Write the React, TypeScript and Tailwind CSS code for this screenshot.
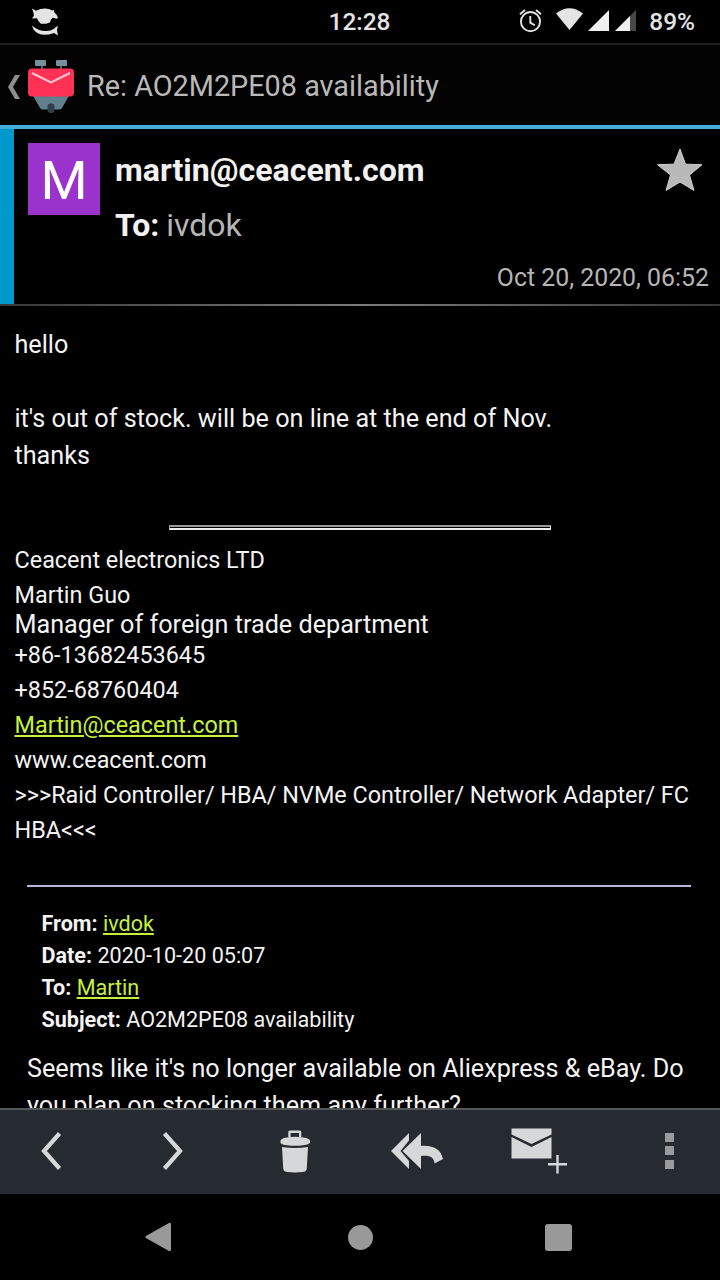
import type { ReactNode } from "react";

function StatusBar() {
  return (
    <div className="grid h-[45px] shrink-0 grid-cols-[1fr_auto_1fr] items-center border-b-2 border-[#1d1f20] text-[#e4e4e4]">
      <svg className="ml-[31px] h-7 w-7" viewBox="31 7.500 28 28" fill="currentColor">
        <path d="M32 8l4 2.200Q45 6 52.500 10l1.500-.5v2q3.500 3 4 6l-1.500.8-3.500-1-2 1.500-1 3.200-4 1.200h-5l-2.500-2.500-1.500-3-5 .3 2-3-.7-3.500z" />
        <path d="M32 25q6 5.500 14 5.500 5 0 8-2.200l3.800-3.300-.8 5 1 5-4-2.500Q40 37.500 33.500 29z" />
      </svg>
      <span className="pt-[2px] pr-px text-[24.400px] font-medium">12:28</span>
      <div className="flex items-center justify-end pr-[25px]">
        <svg className="h-7 w-[120px]" viewBox="518 8 120 28">
          <g fill="none" stroke="#e4e4e4" strokeWidth="1.9">
            <circle cx="530.5" cy="22.600" r="9.600" />
            <path d="M530.300 17v6.600l4.500 2.700M520 15.200l5-4.200M541 15.200l-5-4.200" />
          </g>
          <path d="M556 14.500q13.500-10.500 27 0L569.500 31z" fill="#e4e4e4" />
          <path d="M609 11v21h-21z" fill="#f0f0f0" />
          <path d="M636 11v21h-21z" fill="#484848" />
          <path d="M630 17v15h-15z" fill="#f0f0f0" />
        </svg>
        <span className="ml-[11px] pt-[2px] text-[24.400px] font-medium">89%</span>
      </div>
    </div>
  );
}

function TitleBar() {
  return (
    <div className="flex h-[84px] shrink-0 items-center border-b-4 border-[#43add6] bg-[#030303] pt-[3px]">
      <svg className="ml-2 h-[26px] w-3" viewBox="0 0 12 26" fill="#8e8e8e">
        <path d="M7 1h5L5 13l7 12H7L0 13z" />
      </svg>
      <svg className="ml-2 h-[54px] w-[46px]" viewBox="28 60 46 54">
        <path d="M41 65h2v5h-2zM60 65h2v5h-2z" fill="#50656f" />
        <rect x="35" y="60" width="11" height="6" rx="1" fill="#78909c" />
        <rect x="56" y="60" width="11" height="6" rx="1" fill="#78909c" />
        <path d="M32 94h38l-8 14q-1 1.500-3 1.500H43q-2 0-3-1.500z" fill="#627f8e" />
        <rect x="47.500" y="103.500" width="7" height="9.500" rx="3" fill="#303f47" />
        <rect x="28" y="68.500" width="46" height="28" rx="4" fill="#ff3155" />
        <path d="M32 73l19 9.500 19-9.500" fill="none" stroke="#ffc9d2" strokeWidth="2" />
      </svg>
      <h1 className="ml-[13px] pt-px text-[28.800px] text-[#b9b9b9]">Re: AO2M2PE08 availability</h1>
    </div>
  );
}

function MessageHeader() {
  return (
    <>
      <div className="flex h-[175px] shrink-0">
        <div className="w-3.5 shrink-0 bg-[#0099cc]" />
        <div className="mt-3.5 ml-3.5 flex size-[72px] shrink-0 items-center justify-center bg-[#9933cc] pt-[2px] text-[54px] text-white">
          M
        </div>
        <div className="ml-[15px] flex flex-1 flex-col">
          <div className="flex justify-between pt-[22px]">
            <div className="text-[32.100px] leading-[38px] font-bold text-[#f1f1f1]">martin@ceacent.com</div>
            <svg className="mr-[17px] -mt-[3px] h-[44px] w-[46px]" viewBox="657 148 46 44">
              <path
                d="M680 149l5.500 15.200 16.500.5-12.500 10.300 4.500 15.500-14-8.500-14 8.500 4.500-15.500L657.500 164.700l16.500-.5z"
                fill="#b9b9b9"
                stroke="#cecece"
                strokeWidth="1"
              />
            </svg>
          </div>
          <div className="mt-[14px] text-[32px] leading-[38px] text-[#b5b5b5]">
            <b className="text-[#f1f1f1]">To:</b>
            <span className="ml-[7px]">ivdok</span>
          </div>
          <div className="mt-[19px] pr-[11px] text-right text-[24.850px] leading-[30px] text-[#b5b5b5]">
            Oct 20, 2020, 06:52
          </div>
        </div>
      </div>
      <div className="h-0.5 shrink-0 bg-linear-to-r from-[#383838] via-[#7c7c7c] to-[#383838]" />
    </>
  );
}

function Link({ children }: { children: ReactNode }) {
  return <a className="text-[#c5f03c] underline decoration-2 underline-offset-[2px]">{children}</a>;
}

function MessageBody() {
  return (
    <main className="h-[802px] shrink-0 overflow-hidden pt-5 text-[25.200px] leading-[37px] text-[#f3f3f3]">
      <div className="px-[14.500px]">
        <p>hello</p>
        <p className="mt-[37px]">it's out of stock. will be on line at the end of Nov.</p>
        <p>thanks</p>
        <div className="mx-auto mt-[51px] h-[5px] w-[382px] border-t-2 border-r border-b-2 border-l border-t-[#9a9a9a] border-r-[#eeeeee] border-b-[#eeeeee] border-l-[#9a9a9a]" />
        <div className="mt-[13px] text-[23.400px] leading-[35px] whitespace-nowrap">
          <p>Ceacent electronics LTD</p>
          <p>Martin Guo</p>
          <p className="-mt-px mb-px text-[25.200px] leading-[25px]">Manager of foreign trade department</p>
          <p>+86-13682453645</p>
          <p>+852-68760404</p>
          <p>
            <Link>Martin@ceacent.com</Link>
          </p>
          <p>www.ceacent.com</p>
          <p>{">>>Raid Controller/ HBA/ NVMe Controller/ Network Adapter/ FC"}</p>
          <p>{"HBA<<<"}</p>
        </div>
      </div>
      <blockquote className="mt-[37px] mr-[29px] ml-[27px]">
        <div className="h-0.5 bg-[#b5b8da]" />
        <div className="mt-[21px] ml-[14.500px] text-[21.570px] leading-8">
          <p><b>From:</b> <Link>ivdok</Link></p>
          <p><b>Date:</b> 2020-10-20 05:07</p>
          <p><b>To:</b> <Link>Martin</Link></p>
          <p><b>Subject:</b> AO2M2PE08 availability</p>
        </div>
        <p className="mt-[14px] whitespace-nowrap">
          Seems like it's no longer available on Aliexpress &amp; eBay. Do
          <br />
          you plan on stocking them any further?
        </p>
      </blockquote>
    </main>
  );
}

function Toolbar() {
  return (
    <div className="flex h-[86px] shrink-0 items-center border-t-2 border-[#555759] bg-[#262b31] pb-0.5 pl-10 text-[#d5d7d9]">
      <svg className="h-10 w-[22px]" viewBox="40 1131 22 40" fill="none" stroke="currentColor" strokeWidth="4.200">
        <path d="M59.500 1133.500L44 1151l15.500 17.500" />
      </svg>
      <svg className="ml-[100px] h-10 w-[22px]" viewBox="162 1131 22 40" fill="none" stroke="currentColor" strokeWidth="4.200">
        <path d="M164.500 1133.500L180 1151l-15.500 17.500" />
      </svg>
      <svg className="ml-[96px] h-11 w-[30px]" viewBox="280 1129 30 44" fill="currentColor">
        <path d="M288.300 1137v-5q0-1.500 1.500-1.500h10q1.500 0 1.500 1.500v5h-2.300v-4h-8.400v4z" />
        <path d="M280.500 1141q0-2.500 6-3.500 8.500-1.300 17 0 6.500 1 6.500 3.500v2q-2 1.800-7 2.300-8 1-16 0-5-.5-6.500-2.300z" />
        <path d="M282 1147q13 2 26 0l-1.200 21q0 4-4.500 4-7.300.8-14.600 0-4.500 0-4.500-4z" />
      </svg>
      <svg className="ml-[80px] h-10 w-[54px]" viewBox="390 1131 54 40" fill="currentColor">
        <path d="M409 1133v7.500L400.500 1151l8.500 10v8L391 1151z" />
        <path d="M421 1133v13c13-1 20 4 22 13l-8.500 4.500c-.5-6.500-5-8.500-13.500-7.500v13L402.500 1151z" />
      </svg>
      <svg className="ml-[67px] h-[46px] w-[56px]" viewBox="511 1128 56 46">
        <path d="M511.500 1128.500h40v6L531.500 1144l-20-9.500zM511.500 1137l20 10 20-10v21.500h-40z" fill="currentColor" />
        <path d="M557.500 1155v18.500M548 1164.200h19" stroke="currentColor" strokeWidth="2.400" />
      </svg>
      <svg className="ml-[98px] h-9 w-[10px]" viewBox="665 1133 10 36" fill="#999b9f">
        <path d="M665 1133h9v9h-9zM665 1146h9v9h-9zM665 1160h9v9h-9z" />
      </svg>
    </div>
  );
}

function NavigationBar() {
  return (
    <div className="flex h-[86px] shrink-0 items-center pl-[145px]">
      <svg className="h-[30px] w-[27px]" viewBox="0 0 27 30" fill="#999999">
        <path d="M1.300 13.700L23.500 1.200q2.500-1 2.500 1v25.500q0 2-2.500 1L1.300 16.200q-2-1.200 0-2.500z" />
      </svg>
      <div className="ml-[176px] size-[25px] rounded-full bg-[#999999]" />
      <div className="ml-[172px] size-[27px] rounded-[3px] bg-[#999999]" />
    </div>
  );
}

export default function App() {
  return (
    <div className="flex h-[1280px] w-[720px] flex-col overflow-hidden bg-black font-['Roboto',sans-serif]">
      <StatusBar />
      <TitleBar />
      <MessageHeader />
      <MessageBody />
      <Toolbar />
      <NavigationBar />
    </div>
  );
}
